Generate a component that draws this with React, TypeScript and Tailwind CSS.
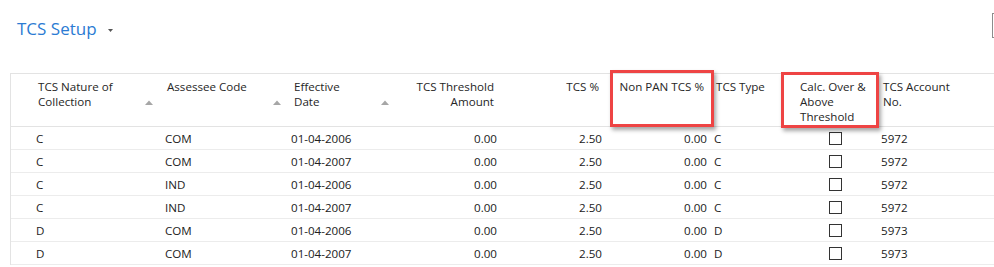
import React from "react";

type Row = { n: string; a: string; d: string; t: string; p: string; np: string; ty: string; acc: string };

const rows: Row[] = [
  { n: "C", a: "COM", d: "01-04-2006", t: "0.00", p: "2.50", np: "0.00", ty: "C", acc: "5972" },
  { n: "C", a: "COM", d: "01-04-2007", t: "0.00", p: "2.50", np: "0.00", ty: "C", acc: "5972" },
  { n: "C", a: "IND", d: "01-04-2006", t: "0.00", p: "2.50", np: "0.00", ty: "C", acc: "5972" },
  { n: "C", a: "IND", d: "01-04-2007", t: "0.00", p: "2.50", np: "0.00", ty: "C", acc: "5972" },
  { n: "D", a: "COM", d: "01-04-2006", t: "0.00", p: "2.50", np: "0.00", ty: "D", acc: "5973" },
  { n: "D", a: "COM", d: "01-04-2007", t: "0.00", p: "2.50", np: "0.00", ty: "D", acc: "5973" },
];

function SortArrow() {
  return (
    <svg width="8" height="5" viewBox="0 0 8 5" className="shrink-0">
      <polygon points="0,5 4,0.5 8,5" fill="#a6a6a6" />
    </svg>
  );
}

export default function App() {
  return (
    <div
      className="relative w-[994px] h-[267px] overflow-hidden bg-white text-[#212121]"
      style={{ fontFamily: '"Open Sans", "Noto Sans", sans-serif' }}
    >
      {/* Top bar */}
      <div className="flex items-start h-[73px]">
        <div className="flex items-center pl-[17px] pt-[16px]">
          <span className="text-[17px] leading-[26px] text-[#2b7bd3]">TCS Setup</span>
          <svg width="5" height="3" viewBox="0 0 5 3" className="ml-[11px] mt-[2px]">
            <polygon points="0,0 5,0 2.5,3" fill="#555" />
          </svg>
        </div>
        <div className="ml-auto mt-[13px] w-[20px] h-[25px] border border-[#8c8c8c] -mr-[18px]" />
      </div>

      {/* Table */}
      <div className="ml-[10px] border-l border-t border-[#e3e3e3] text-[11.6px] leading-[15px]">
        {/* Header */}
        <div className="flex h-[53px] border-b border-[#e3e3e3] text-[#262626]">
          <div className="w-[148px] pl-[27px] pt-[5px] pr-[6px] flex items-start justify-between">
            <span>TCS Nature of<br />Collection</span>
            <div className="mt-[21px]"><SortArrow /></div>
          </div>
          <div className="w-[128px] pl-[8px] pt-[5px] pr-[6px] flex items-start justify-between">
            <span>Assessee Code</span>
            <div className="mt-[21px]"><SortArrow /></div>
          </div>
          <div className="w-[108px] pl-[7px] pt-[5px] pr-[6px] flex items-start justify-between">
            <span>Effective<br />Date</span>
            <div className="mt-[21px]"><SortArrow /></div>
          </div>
          <div className="w-[106px] pr-[7px] pt-[5px] text-right">TCS Threshold<br />Amount</div>
          <div className="w-[105px] pr-[7px] pt-[5px] text-right">TCS %</div>
          <div className="w-[105px] pr-[7px] pt-[5px] text-right">Non PAN TCS %</div>
          <div className="w-[80px] pl-[5px] pt-[5px]">TCS Type</div>
          <div className="w-[85px] pl-[9px] pt-[5px]">Calc. Over &amp;<br />Above<br />Threshold</div>
          <div className="flex-1 pl-[7px] pt-[5px]">TCS Account<br />No.</div>
        </div>
        {/* Rows */}
        {rows.map((r, i) => (
          <div key={i} className="flex h-[23px] items-center border-b border-[#ececec]">
            <div className="w-[148px] pl-[25px]">{r.n}</div>
            <div className="w-[128px] pl-[6px]">{r.a}</div>
            <div className="w-[108px] pl-[4px]">{r.d}</div>
            <div className="w-[106px] pr-[4px] text-right">{r.t}</div>
            <div className="w-[105px] pr-[4px] text-right">{r.p}</div>
            <div className="w-[105px] pr-[4px] text-right">{r.np}</div>
            <div className="w-[80px] pl-[3px]">{r.ty}</div>
            <div className="w-[85px] pl-[38px] flex items-center">
              <div className="w-[13px] h-[13px] border border-[#333]" />
            </div>
            <div className="flex-1 pl-[5px]">{r.acc}</div>
          </div>
        ))}
      </div>

      {/* Annotation boxes */}
      <div className="absolute left-[610px] top-[70px] w-[104px] h-[57px] border-[3px] border-[#ee4444] shadow-[2px_3px_4px_rgba(0,0,0,0.35)]" />
      <div className="absolute left-[781px] top-[72px] w-[98px] h-[56px] border-[3px] border-[#ee4444] shadow-[2px_3px_4px_rgba(0,0,0,0.35)]" />
    </div>
  );
}
